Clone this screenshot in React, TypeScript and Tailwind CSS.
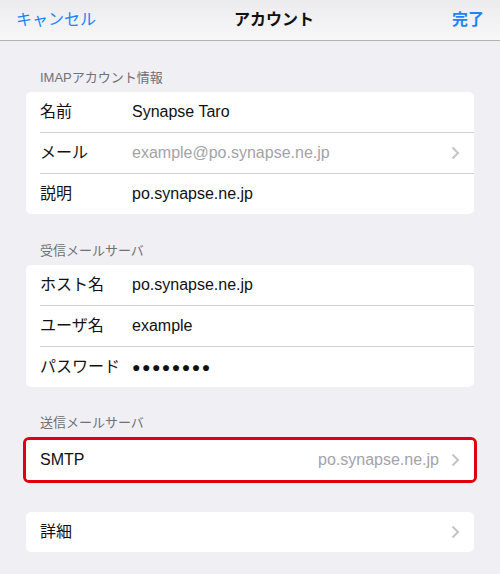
const FONT = "font-['Liberation_Sans','Noto_Sans_CJK_JP',sans-serif]";

type Row = { label: string; value: string; muted?: boolean; chevron?: boolean; dots?: boolean };

function Chevron() {
  return (
    <svg width="9" height="14" viewBox="0 0 9 14" className="shrink-0">
      <polyline points="1.5,1.5 7,7 1.5,12.5" fill="none" stroke="#c4c4c9" strokeWidth="2" />
    </svg>
  );
}

function Header({ text, h }: { text: string; h: string }) {
  return (
    <div className={`flex items-end px-[14px] pb-[6px] ${h}`}>
      <span className="text-[13px] leading-4 text-[#707075]">{text}</span>
    </div>
  );
}

function Card({ rows }: { rows: Row[] }) {
  return (
    <div className="bg-white rounded-[5px] overflow-hidden">
      {rows.map((r, i) => (
        <div key={r.label} className={i > 0 ? "ml-[14px] border-t border-[#d1d1d6]" : "ml-[14px]"}>
          <div className="h-[40px] flex items-center pr-[14px]">
            <span className="w-[92px] text-[16px] text-[#111]">{r.label}</span>
            <span
              className={`flex-1 ${r.dots ? "text-[14px] tracking-[1.5px]" : "text-[16px]"} ${
                r.muted ? "text-[#a3a3a8]" : "text-[#111]"
              }`}
            >
              {r.value}
            </span>
            {r.chevron && <Chevron />}
          </div>
        </div>
      ))}
    </div>
  );
}

export default function App() {
  return (
    <div className={`w-[500px] h-[574px] bg-[#efeff4] ${FONT}`}>
      {/* Nav bar */}
      <div className="h-[41px] flex items-center justify-between px-[16px] bg-gradient-to-b from-[#ececef] to-[#f7f7f8] border-b border-[#b2b2b2]">
        <span className="text-[16px] text-[#1a84fb]">キャンセル</span>
        <span className="text-[16px] font-bold text-[#111]">アカウント</span>
        <span className="text-[16px] font-bold text-[#1a84fb]">完了</span>
      </div>

      <div className="px-[26px]">
        <Header text="IMAPアカウント情報" h="h-[51px]" />
        <Card
          rows={[
            { label: "名前", value: "Synapse Taro" },
            { label: "メール", value: "example@po.synapse.ne.jp", muted: true, chevron: true },
            { label: "説明", value: "po.synapse.ne.jp" },
          ]}
        />

        <Header text="受信メールサーバ" h="h-[51px]" />
        <Card
          rows={[
            { label: "ホスト名", value: "po.synapse.ne.jp" },
            { label: "ユーザ名", value: "example" },
            { label: "パスワード", value: "●●●●●●●●", dots: true },
          ]}
        />

        <Header text="送信メールサーバ" h="h-[50px]" />
        <div className="-mx-[3px] border-[3px] border-[#e0000f] rounded-[6px]">
          <div className="bg-white rounded-[3px] h-[40px] flex items-center pl-[14px] pr-[14px]">
            <span className="flex-1 text-[16px] text-[#111]">SMTP</span>
            <span className="text-[16px] text-[#a3a3a8] mr-[12px]">po.synapse.ne.jp</span>
            <Chevron />
          </div>
        </div>

        <div className="mt-[29px] bg-white rounded-[5px] h-[40px] flex items-center pl-[14px] pr-[14px]">
          <span className="flex-1 text-[16px] text-[#111]">詳細</span>
          <Chevron />
        </div>
      </div>
    </div>
  );
}
